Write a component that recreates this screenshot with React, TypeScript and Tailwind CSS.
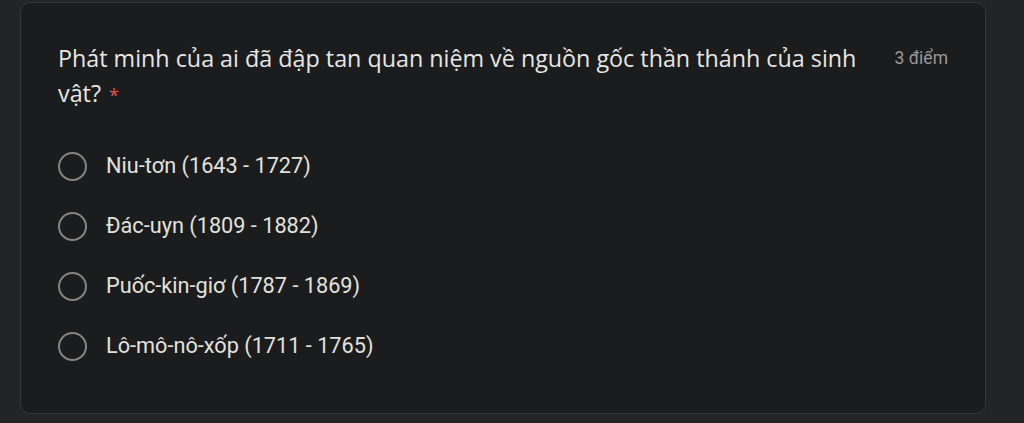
export default function App() {
  const options = [
    'Niu-tơn (1643 - 1727)',
    'Đác-uyn (1809 - 1882)',
    'Puốc-kin-giơ (1787 - 1869)',
    'Lô-mô-nô-xốp (1711 - 1765)',
  ];

  return (
    <div className="h-[423px] w-full bg-[#222425] pl-[20px] pt-[2px]">
      <div className="h-[412px] w-[966px] rounded-[10px] border border-[#36383a] bg-[#1b1c1e] pl-[37px] pr-[37px] pt-[38px]">
        {/* Tiêu đề câu hỏi */}
        <div className="flex items-start justify-between">
          <div
            className="w-[815px] text-[23.3px] leading-[35px] text-[#e8e6e3]"
            style={{ fontFamily: '"Open Sans", sans-serif' }}
          >
            Phát minh của ai đã đập tan quan niệm về nguồn gốc thần thánh của sinh vật?
            <span className="ml-[8px] inline-block text-[18px] leading-none text-[#e2574c]">*</span>
          </div>
          <div
            className="mt-[4px] text-[17.5px] text-[#9a9894]"
            style={{ fontFamily: 'Roboto, sans-serif' }}
          >
            3 điểm
          </div>
        </div>

        {/* Lựa chọn */}
        <div className="mt-[25px] flex flex-col">
          {options.map((opt) => (
            <div key={opt} className="flex h-[60px] items-center gap-[19px]">
              <div className="h-[29px] w-[29px] rounded-full border-[2.5px] border-[#86847f]" />
              <span
                className="text-[21.7px] text-[#e3e1dd]"
                style={{ fontFamily: 'Roboto, sans-serif' }}
              >
                {opt}
              </span>
            </div>
          ))}
        </div>
      </div>
    </div>
  );
}
